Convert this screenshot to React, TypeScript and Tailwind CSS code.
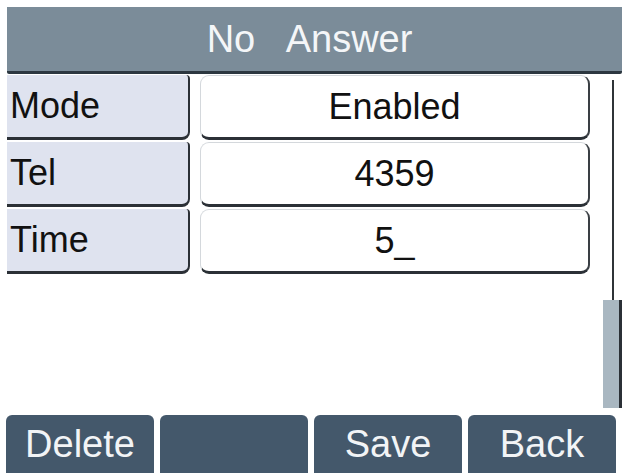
const rows = [
  { label: 'Mode', value: 'Enabled' },
  { label: 'Tel', value: '4359' },
  { label: 'Time', value: '5_' },
];

const softkeys = ['Delete', '', 'Save', 'Back'];

export default function App() {
  return (
    <div className="w-[624px] h-[473px] bg-white flex flex-col overflow-hidden font-['Liberation_Sans',Arial,sans-serif]">
      {/* Title bar */}
      <div className="mt-[7px] ml-[7px] mr-[2px] h-[67px] bg-[#7b8c99] border-b-[3px] border-[#2c3740] rounded-b-[2px] flex items-center justify-center">
        <span className="text-[#f4f6f8] text-[38px] leading-none [word-spacing:22px] mr-[10px]">No Answer</span>
      </div>

      {/* Fields + scrollbar */}
      <div className="flex pl-[7px] pt-[1px]">
        <div className="flex flex-col gap-[2px] w-[583px]">
          {rows.map((row) => (
            <div key={row.label} className="flex h-[65px] gap-[10px]">
              <div className="w-[183px] bg-[#dfe3ef] border-b-[3px] border-r-2 border-[#2b3036] rounded-br-[8px] rounded-tr-[4px] flex items-center pl-[3px]">
                <span className="text-[#111] text-[36px] leading-none">{row.label}</span>
              </div>
              <div className="w-[390px] bg-white border border-[#d4d8dc] border-b-[3px] border-r-2 border-b-[#2b3036] border-r-[#3a3f44] rounded-[9px] flex items-center justify-center">
                <span className="text-[#111] text-[36px] leading-none">{row.value}</span>
              </div>
            </div>
          ))}
        </div>

        <div className="ml-[13px] mt-[5px] w-[19px] flex flex-col">
          <div className="h-[220px] pl-[9px]">
            <div className="w-[2px] h-full bg-[#2f3438]" />
          </div>
          <div className="h-[108px] w-[19px] bg-[#a9b7c1] border-r-[3px] border-[#2b3036]" />
        </div>
      </div>

      {/* Softkeys */}
      <div className="mt-auto flex gap-[6px] pl-[6px] h-[58px]">
        {softkeys.map((key, i) => (
          <div
            key={i}
            className="w-[148px] h-full bg-[#44586b] rounded-t-[6px] flex items-center justify-center"
          >
            <span className="text-[#f2f4f6] text-[38px] leading-none">{key}</span>
          </div>
        ))}
      </div>
    </div>
  );
}
